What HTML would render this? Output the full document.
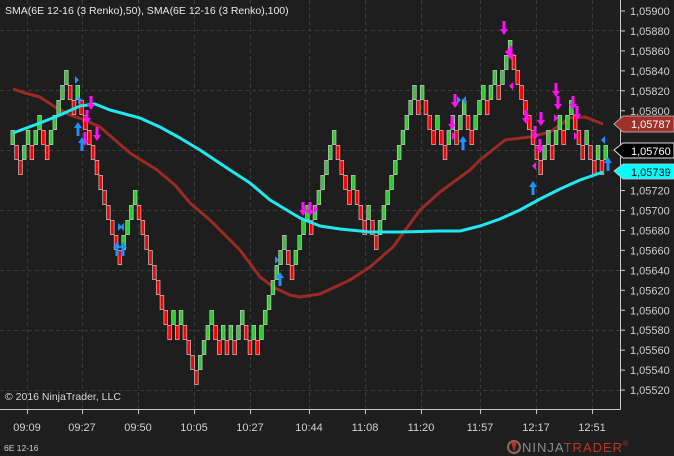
<!DOCTYPE html>
<html><head><meta charset="utf-8"><style>
html,body{margin:0;padding:0;background:#1e1e1e;}
svg{display:block;}
text{font-family:"Liberation Sans",sans-serif;}
</style></head><body>
<svg id="s" width="674" height="456" xmlns="http://www.w3.org/2000/svg">
<rect width="674" height="456" fill="#1e1e1e"/>
<g id="grid" stroke="#3a3a3a" stroke-dasharray="4,3" stroke-width="1"></g>
<path id="red" fill="none" stroke="#9b2a24" stroke-width="3" stroke-linejoin="round"/>
<g id="bricks"></g>
<path id="cyan" fill="none" stroke="#1ee8f0" stroke-width="3" stroke-linejoin="round"/>
<g id="arrows"></g>
<line x1="620.5" y1="0" x2="620.5" y2="409.5" stroke="#c8c8c8"/>
<line x1="0" y1="409.5" x2="620.5" y2="409.5" stroke="#c8c8c8"/>
<g id="axis" fill="#d0d0d0" font-size="11"></g>
<text x="5" y="14" fill="#e8e8e8" font-size="10.5">SMA(6E 12-16 (3 Renko),50), SMA(6E 12-16 (3 Renko),100)</text>
<text x="5" y="400" fill="#d8d8d8" font-size="10.5">© 2016 NinjaTrader, LLC</text>
<text x="4" y="451" fill="#d0d0d0" font-size="8.5">6E 12-16</text>
<circle cx="514" cy="447" r="6" fill="none" stroke="#8a6a60" stroke-width="2"/>
<path d="M511 442 L514 452 L517 442" fill="#b0302a"/>
<text x="522" y="452" font-size="13" letter-spacing="1" fill="#8c8c8c">NINJA<tspan fill="#b8342e">TRADER</tspan><tspan font-size="7" fill="#b8342e" dy="-6">®</tspan></text>
<path d="M614 124 L623 116 L674 116 L674 132 L623 132 Z" fill="#a0302a" stroke="#c8c8c8" stroke-width="0.8"/>
<text x="631" y="128" fill="#ffffff" font-size="11">1,05787</text>
<path d="M614 150 L623 143 L674 143 L674 158 L623 158 Z" fill="#000" stroke="#e0e0e0" stroke-width="1"/>
<text x="631" y="155" fill="#ffffff" font-size="11">1,05760</text>
<path d="M614 171 L623 164 L674 164 L674 179 L623 179 Z" fill="#00ffff" stroke="#c8c8c8" stroke-width="0.8"/>
<text x="631" y="176" fill="#000" font-size="11">1,05739</text>
</svg>
<script>
var NS="http://www.w3.org/2000/svg";
function el(p,t,a){var e=document.createElementNS(NS,t);for(var k in a)e.setAttribute(k,a[k]);p.appendChild(e);return e;}
var g=document.getElementById('grid');
var tx=[27,82,138,194,250,309,365,421,480,536,592];
tx.forEach(function(x){el(g,'line',{x1:x+.5,y1:0,x2:x+.5,y2:409});});
[30,90,150,210,270,330,390].forEach(function(y){el(g,'line',{x1:0,y1:y+.5,x2:620,y2:y+.5});});
var ax=document.getElementById('axis');
var times=["09:09","09:27","09:50","10:05","10:27","10:44","11:08","11:20","11:57","12:17","12:51"];
tx.forEach(function(x,i){el(ax,'line',{x1:x+.5,y1:409,x2:x+.5,y2:414,stroke:'#c8c8c8'});var t=el(ax,'text',{x:x,y:431,'text-anchor':'middle'});t.textContent=times[i];});
for(var k=0;k<20;k++){var v=900-k*20;var y=11+k*19.95;el(ax,'line',{x1:620,y1:y,x2:625,y2:y,stroke:'#c8c8c8'});
 if(v==780||v==760||v==740)continue;var t=el(ax,'text',{x:630,y:y+4});t.textContent="1,05"+String(v).padStart(3,'0');}
var tops=[130,145,160,145,130,145,130,115,130,145,130,115,100,85,70,85,100,85,
100,115,130,145,160,175,190,205,220,235,250,235,220,205,190,
205,220,235,250,265,280,295,310,325,310,325,310,325,340,355,370,355,340,325,310,325,340,325,340,325,340,325,310,325,340,325,340,325,310,295,280,265,250,235,250,265,250,235,220,205,
220,205,190,175,160,145,130,145,160,175,190,175,190,205,220,205,220,235,220,205,190,175,160,145,130,115,100,85,100,85,100,115,130,115,130,145,130,115,130,115,100,
115,130,115,100,85,100,85,70,85,70,55,40,55,70,85,100,115,130,145,160,145,130,145,130,115,130,115,100,115,130,145,130,145,160,145,160,145];
var b=document.getElementById('bricks');var n=tops.length,step=593/(n-1);
for(var i=0;i<n;i++){var x=10.7+i*step;var up=(i==0)||tops[i]<tops[i-1];
 el(b,'rect',{x:(x+0.2).toFixed(1),y:tops[i]+0.4,width:3.7,height:14.2,fill:up?'#2ecc2e':'#ff0000',stroke:'#c8c8c8','stroke-width':0.7});}
function pth(id,pts){var d='M'+pts.map(function(p){return p[0]+' '+p[1];}).join(' L');document.getElementById(id).setAttribute('d',d);}
pth('cyan',[[13,133],[40,123],[60,115],[80,106],[95,104],[110,110],[140,118],[160,127],[180,138],[200,150],[230,170],[250,183],[270,200],[300,218],[320,226],[340,229],[370,232],[400,232],[440,231],[460,231],[480,226],[500,219],[520,210],[540,199],[560,189],[580,180],[603,172]]);
pth('red',[[13,89],[25,93],[40,97],[55,107],[70,115],[85,120],[100,127],[115,140],[130,153],[157,170],[175,185],[190,203],[210,220],[240,250],[260,277],[275,288],[290,295],[300,297],[320,294],[350,280],[370,267],[393,247],[420,210],[440,192],[470,170],[480,160],[505,140],[530,137],[550,132],[570,118],[585,117],[603,124]]);
var a=document.getElementById('arrows');
function arr(x,y,dn,c){
 if(dn)el(a,'path',{d:'M'+(x-1.5)+' '+(y-14)+' h3 v8 h2.5 L'+x+' '+y+' L'+(x-4)+' '+(y-6)+' h2.5 Z',fill:c});
 else el(a,'path',{d:'M'+(x-1.5)+' '+(y+14)+' h3 v-8 h2.5 L'+x+' '+y+' L'+(x-4)+' '+(y+6)+' h2.5 Z',fill:c});}
function tri(x,y,r,c){el(a,'path',{d:r?('M'+x+' '+(y-4)+' L'+(x+4)+' '+y+' L'+x+' '+(y+4)+'Z'):('M'+x+' '+(y-4)+' L'+(x-4)+' '+y+' L'+x+' '+(y+4)+'Z'),fill:c});}
var M='#ff10f0',B='#2090ff';
[[91,110],[87,124],[97,141],[85,146],[303,216],[310,216],[504,35],[511,60],[455,108],[526,124],[541,126],[556,97],[558,110],[573,110],[577,120],[535,140],[452,130],[540,153]].forEach(function(p){arr(p[0],p[1],1,M);});
[[78,122],[117,242],[123,242],[280,272],[463,136],[533,181],[608,157],[82,137]].forEach(function(p){arr(p[0],p[1],0,B);});
[[75,80,1,B],[78,100,1,B],[124,227,0,B],[118,227,1,B],[457,100,1,B],[466,100,0,B],[605,140,0,B],[275,260,1,B],[509,52,0,M],[513,86,0,M],[525,115,1,M],[536,166,0,M],[554,118,1,M],[574,136,1,M],[452,136,1,M],[306,209,0,M],[314,209,1,M]].forEach(function(p){tri(p[0],p[1],p[2],p[3]);});
</script>
</body></html>
